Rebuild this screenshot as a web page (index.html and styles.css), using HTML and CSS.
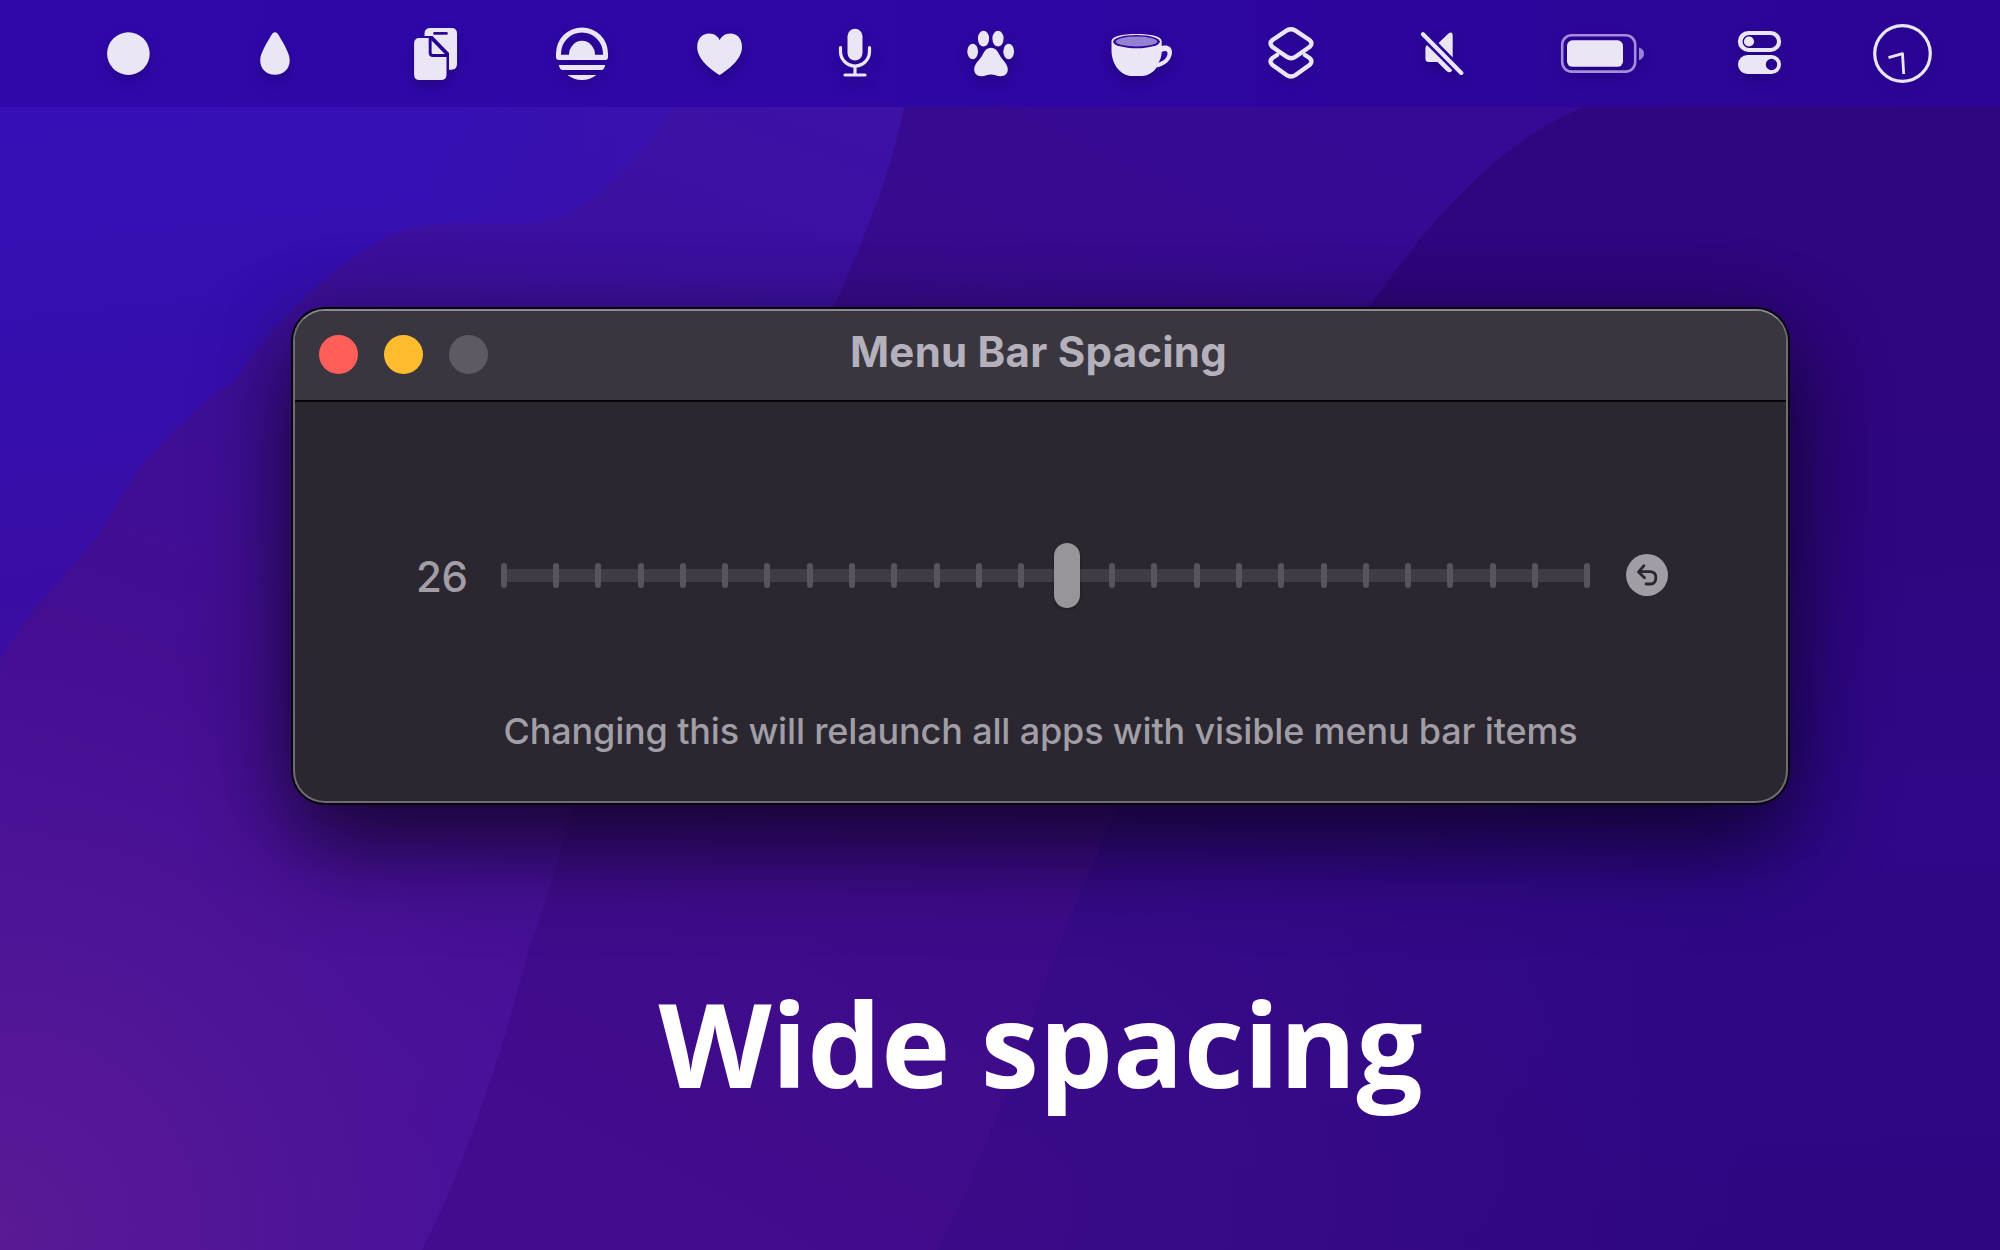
FILE: index.html
```html
<!DOCTYPE html>
<html lang="en">
<head>
<meta charset="utf-8">
<title>Menu Bar Spacing</title>
<link rel="stylesheet" href="styles.css">
</head>
<body>
<div class="desktop">
  <svg class="wallpaper" viewBox="0 0 2000 1250" preserveAspectRatio="none" aria-hidden="true">
    <defs>
      <linearGradient id="far" gradientUnits="userSpaceOnUse" x1="1700" y1="100" x2="1740" y2="1250">
        <stop offset="0" stop-color="#30067e"/><stop offset="0.35" stop-color="#2e067e"/><stop offset="0.62" stop-color="#2e0888"/><stop offset="1" stop-color="#2e0682"/>
      </linearGradient>
      <radialGradient id="farGlow" gradientUnits="userSpaceOnUse" cx="1000" cy="1200" r="750">
        <stop offset="0" stop-color="#3b0b88"/><stop offset="1" stop-color="#3b0b88" stop-opacity="0"/>
      </radialGradient>
      <linearGradient id="mid" gradientUnits="userSpaceOnUse" x1="1300" y1="100" x2="700" y2="1250">
        <stop offset="0" stop-color="#360a94"/><stop offset="0.5" stop-color="#3b0b86"/><stop offset="1" stop-color="#410c8e"/>
      </linearGradient>
      <linearGradient id="near" gradientUnits="userSpaceOnUse" x1="800" y1="100" x2="400" y2="1250">
        <stop offset="0" stop-color="#3b11a6"/><stop offset="0.35" stop-color="#3d0f98"/><stop offset="0.6" stop-color="#430e92"/><stop offset="0.85" stop-color="#47119a"/><stop offset="1" stop-color="#47109c"/>
      </linearGradient>
      <radialGradient id="corner" gradientUnits="userSpaceOnUse" cx="0" cy="1230" r="600">
        <stop offset="0" stop-color="#5a1a95"/><stop offset="0.4" stop-color="#541796" stop-opacity="0.75"/><stop offset="1" stop-color="#4c1296" stop-opacity="0"/>
      </radialGradient>
      <linearGradient id="blue" gradientUnits="userSpaceOnUse" x1="120" y1="110" x2="180" y2="660">
        <stop offset="0" stop-color="#3610b6"/><stop offset="0.4" stop-color="#350fae"/><stop offset="1" stop-color="#3b0da2"/>
      </linearGradient>
      <linearGradient id="blueFade" gradientUnits="userSpaceOnUse" x1="430" y1="0" x2="700" y2="0">
        <stop offset="0" stop-color="#3b11a6" stop-opacity="0"/><stop offset="1" stop-color="#3b11a6" stop-opacity="0.7"/>
      </linearGradient>
    </defs>
    <rect width="2000" height="1250" fill="url(#far)"/>
    <rect width="2000" height="1250" fill="url(#farGlow)"/>
    <path fill="url(#mid)" d="M0 0H1680V107H1584C1500 140 1430 220 1368 308C1240 500 1160 690 1110 823C1075 905 1042 985 1008 1087C985 1150 960 1205 938 1250H0Z"/>
    <path fill="url(#near)" d="M0 0H910L904 107C892 170 862 245 833 308C720 540 610 690 568 823C550 890 540 920 528 951C515 1000 503 1045 487 1090C470 1140 448 1200 422 1250H0Z"/>
    <path fill="url(#corner)" d="M0 600H640C600 680 582 760 568 823C550 890 540 920 528 951C515 1000 503 1045 487 1090C470 1140 448 1200 422 1250H0Z"/>
    <path fill="url(#blue)" d="M0 0H700L672 107C655 140 635 165 610 184C585 205 570 217 546 221C505 230 470 218 428 225C405 229 390 234 375 243C345 262 315 285 293 309C270 332 255 350 235 382C200 400 175 432 147 459C125 485 112 520 88 547C60 582 25 615 0 661Z"/>
    <path fill="url(#blueFade)" d="M430 107H672C655 140 635 165 610 184C585 205 570 217 546 221C505 230 470 218 430 225Z"/>
  </svg>

  <header class="menubar">
    <svg class="icon icon-dot" viewBox="107 24 43 60"><circle cx="128.4" cy="53.6" r="21.3"/></svg>
    <svg class="icon icon-drop" viewBox="260 24 30 60"><path d="M275 32.2C276.600 32.2 277.700 33.400 278.600 35C283.500 43.500 289.700 53 289.700 60.500C289.700 69 283.500 74.800 275 74.800S260.200 69 260.200 60.500C260.200 53 266.500 43.500 271.400 35C272.300 33.400 273.400 32.200 275 32.200Z"/></svg>
    <svg class="icon icon-docs" viewBox="414 24 43 60">
      <path d="M430.500 28H451.500Q457 28 457 33.500V64Q457 69.700 451.500 69.700H449V53L432.500 36H424.500V33.500Q424.500 28 430.500 28Z"/>
      <path class="cut" d="M434.500 33.400H446.500"/>
      <path d="M419.500 38H428.700V52.500Q428.700 57 433 57H446.500V74.500Q446.500 80 441 80H419.500Q414.100 80 414.100 74.500V43.500Q414.100 38 419.500 38Z"/>
      <path d="M431.600 40.500L444.800 54H433Q431.600 54 431.600 52.500Z"/>
    </svg>
    <svg class="icon icon-sun" viewBox="556 24 52 60">
      <path fill-rule="evenodd" d="M556 53.500A26 26 0 0 1 608 53.500V57Q608 60 605.300 60H558.700Q556 60 556 57ZM561 54.800H569A13 14 0 0 1 595 54.800H603V53.500A21 21 0 0 0 561 53.500Z"/>
      <path d="M558.700 65H605.300C604.500 68 603.500 70 601 70H563C560.500 70 559.500 68 558.700 65ZM567.500 75H596.500C592.500 78 587.500 80 582 80S571.500 78 567.500 75Z"/>
    </svg>
    <svg class="icon icon-heart" viewBox="697 24 45 60"><path d="M719.700 75C717 73.500 697.200 61.500 697.200 47.200C697.200 38.500 702.500 33.600 709 33.600C714.500 33.600 718 36.500 719.700 40.300C721.400 36.500 725 33.600 730.400 33.600C737 33.600 742 38.500 742 47.200C742 61.500 722 73.500 719.700 75Z"/></svg>
    <svg class="icon icon-mic" viewBox="839 24 32 60">
      <rect x="847.500" y="28.800" width="15" height="31.700" rx="7.500"/>
      <path class="line" d="M840.500 47.500V51.500A14.500 14.500 0 0 0 869.500 51.500V47.500M855 66.500V75M845 75H865"/>
    </svg>
    <svg class="icon icon-paw" viewBox="967 24 47 60">
      <ellipse cx="972.700" cy="51.500" rx="5.400" ry="7.700"/><ellipse cx="983.500" cy="38.600" rx="5.600" ry="7.900"/><ellipse cx="998" cy="38.600" rx="5.600" ry="7.900"/><ellipse cx="1008.700" cy="51.500" rx="5.400" ry="7.700"/>
      <path d="M991 47.800C994.500 47.800 997 50 999 54C1001.500 60 1007.800 63 1007.800 69.500C1007.800 73.500 1005 76.200 1000.500 76.200C996.500 76.200 994.500 74.500 991 74.500S985.500 76.200 981.500 76.200C977 76.200 974.200 73.500 974.200 69.500C974.200 63 980.500 60 983 54C985 50 987.500 47.800 991 47.800Z"/>
    </svg>
    <svg class="icon icon-cup" viewBox="1111 24 61 60">
      <path d="M1111.500 41C1111.500 36.500 1122 34 1136.500 34S1161.700 36.500 1161.700 41V46C1167 44.500 1172 46.500 1172 52C1172 60 1165 66 1156.500 67.500C1153 73 1147 76 1142 76H1132C1122 76 1111.500 66 1111.500 50Z"/>
      <ellipse class="void" cx="1136.500" cy="41.700" rx="23.400" ry="6.600"/>
      <ellipse class="tea" cx="1136.500" cy="41.500" rx="20.700" ry="5.100"/>
      <path class="void" d="M1161.700 52C1165 50.500 1168 50.500 1167.500 54C1167 58 1163 61.500 1158.500 62.500C1160.500 60 1161.500 56 1161.700 52Z"/>
    </svg>
    <svg class="icon icon-layers" viewBox="1268 24 46 60">
      <path class="thick" d="M1277 55L1272.500 58Q1268.500 61.500 1272.500 65L1286.500 75Q1291 78 1295.500 75L1309.500 65Q1313.500 61.500 1309.500 58L1305 55"/>
      <path class="thick" d="M1286.500 30.700Q1291 27.700 1295.500 30.700L1309.500 40Q1313.500 43.500 1309.500 47L1295.500 56.700Q1291 59.700 1286.500 56.700L1272.500 47Q1268.500 43.500 1272.500 40Z"/>
    </svg>
    <svg class="icon icon-mute" viewBox="1421 24 43 60">
      <path d="M1438.500 43L1448.500 33.500Q1452.700 30.500 1452.700 36V57.500ZM1427 45L1452 69.500C1452.500 72 1449.500 73.500 1446.500 71L1437.500 62H1429Q1425.400 62 1425.400 58.500V48.500Q1425.400 46 1427 45Z"/>
      <path class="slash-gap" d="M1427 38.300L1457.300 68.900"/>
      <path class="slash" d="M1423 34.300L1461.300 72.900"/>
    </svg>
    <svg class="icon icon-battery" viewBox="1561 24 84 60">
      <rect class="shell" x="1562.200" y="35.200" width="73" height="36.400" rx="9.500"/>
      <rect x="1567" y="40.300" width="56" height="26.500" rx="5.500"/>
      <path class="cap" d="M1639 47.500C1642 48.500 1644 50.500 1644 53.700S1642 59 1639 60.200Z"/>
    </svg>
    <svg class="icon icon-control" viewBox="1738 24 43 60">
      <path fill-rule="evenodd" d="M1748.300 31H1770.700A10.400 10.400 0 0 1 1770.700 51.900H1748.300A10.400 10.400 0 0 1 1748.300 31ZM1749 35A6.500 6.500 0 0 0 1749 48H1770.500A6.500 6.500 0 0 0 1770.500 35Z"/>
      <circle cx="1749" cy="41.500" r="5.100"/>
      <path fill-rule="evenodd" d="M1747.500 55H1771.500A9.500 9.500 0 0 1 1771.500 74H1747.500A9.500 9.500 0 0 1 1747.500 55ZM1771.500 58.800A5.700 5.700 0 1 0 1771.500 70.200A5.700 5.700 0 1 0 1771.500 58.800Z"/>
    </svg>
    <svg class="icon icon-clock" viewBox="1873 24 59 60">
      <circle class="line" cx="1902.500" cy="53.500" r="27.800"/>
      <path class="hand" d="M1888.500 57.700L1902.500 53.600L1903.700 74"/>
    </svg>
  </header>

  <main class="stage">
    <section class="window">
      <div class="titlebar">
        <div class="lights"><span class="light close"></span><span class="light minimize"></span><span class="light zoom"></span></div>
        <h1 class="title">Menu Bar Spacing</h1>
      </div>
      <div class="content">
        <div class="control-row">
          <span class="value">26</span>
          <div class="slider">
            <div class="ticks">
              <i></i><i></i><i></i><i></i><i></i><i></i><i></i><i></i><i></i><i></i><i></i><i></i><i></i><b class="thumb"></b><i></i><i></i><i></i><i></i><i></i><i></i><i></i><i></i><i></i><i></i><i></i><i></i>
            </div>
          </div>
          <svg class="reset" viewBox="0 0 42 42"><circle cx="21" cy="21" r="21"/><path d="M18 11.700L12.500 18L18.500 23.800M13 17.600H24.500Q29.800 18 29.800 23.500Q29.800 30 24.500 30H20"/></svg>
        </div>
        <p class="note">Changing this will relaunch all apps with visible menu bar items</p>
      </div>
    </section>
    <h2 class="caption">Wide spacing</h2>
  </main>
</div>
</body>
</html>
```
FILE: styles.css
```css
* { box-sizing: border-box; }
body { margin: 0; }
.desktop {
  position: relative;
  width: 2000px;
  height: 1250px;
  overflow: hidden;
  background: #34098c;
}
.wallpaper { position: absolute; inset: 0; width: 100%; height: 100%; }

/* Menu bar */
.menubar {
  position: relative;
  display: flex;
  height: 107px;
  padding-top: 24px;
  background: linear-gradient(90deg, #3008aa, #2e06a2 50%, #2c0596);
}
.icon {
  flex: none;
  height: 60px;
  overflow: visible;
  fill: #ebe6f6;
  filter: drop-shadow(0 5px 6px rgba(15, 0, 70, .35));
}
.icon-dot { width: 43px; margin-left: 107px; }
.icon-drop { width: 30px; margin-left: 110px; }
.icon-docs { width: 43px; margin-left: 124px; }
.icon-sun { width: 52px; margin-left: 99px; }
.icon-heart { width: 45px; margin-left: 89px; }
.icon-mic { width: 32px; margin-left: 97px; }
.icon-paw { width: 47px; margin-left: 96px; }
.icon-cup { width: 61px; margin-left: 97px; }
.icon-layers { width: 46px; margin-left: 96px; }
.icon-mute { width: 43px; margin-left: 107px; }
.icon-battery { width: 84px; margin-left: 97px; }
.icon-control { width: 43px; margin-left: 93px; }
.icon-clock { width: 59px; margin-left: 92px; }
.line, .thick, .slash, .slash-gap, .hand, .shell {
  fill: none;
  stroke: #ebe6f6;
  stroke-width: 3.2;
  stroke-linecap: round;
  stroke-linejoin: round;
}
.thick { stroke-width: 4.4; }
.slash { stroke-width: 4.2; }
.slash-gap { stroke: #2d069e; stroke-width: 9; stroke-linecap: butt; }
.hand { stroke-width: 2.8; stroke-linecap: butt; }
.shell { stroke-width: 2.6; stroke: #a48edb; }
.cap { fill: #9a82d6; }
.cut { fill: none; stroke: #2a078e; stroke-width: 2.6; stroke-linecap: round; }
.void { fill: #2e06a2; }
.tea { fill: #9680d2; }

/* Window */
.stage {
  position: relative;
  display: flex;
  flex-direction: column;
  padding: 202px 212px 0 293px;
}
.window {
  height: 494px;
  border-radius: 32px;
  overflow: hidden;
  background: #2b2731;
  border: 2px solid #6f6c74;
  border-top-color: #8b898f;
  box-shadow: 0 0 0 2px #08040f, 0 44px 92px rgba(0, 0, 0, .6), 0 0 80px rgba(0, 0, 0, .2);
}
.titlebar {
  display: grid;
  grid-template-columns: 1fr auto 1fr;
  align-items: center;
  height: 91px;
  padding: 0 24px 3px;
  background: #39363f;
  border-bottom: 2px solid #050407;
}
.lights { display: flex; gap: 26px; }
.light { width: 39px; height: 39px; border-radius: 50%; }
.close { background: #ff5f58; }
.minimize { background: #ffbc2f; }
.zoom { background: #5d5a64; }
.title {
  margin: 0 4px 4px 0;
  font: 700 42px/50px Inter, sans-serif;
  letter-spacing: .24px;
  color: #b5b1bc;
  white-space: nowrap;
}
.content { padding-top: 139px; font-family: Inter, sans-serif; color: #a19ea5; }
.control-row { display: flex; align-items: center; height: 68px; padding-left: 121px; }
.value { width: 85px; padding-top: 4px; font-size: 42px; font-weight: 500; letter-spacing: -.5px; line-height: 68px; }
.slider {
  width: 1089px;
  background: linear-gradient(#413b46, #413b46) center / 1083px 13px no-repeat;
}
.ticks { display: flex; align-items: center; justify-content: space-between; height: 68px; }
.ticks i {
  flex: none;
  width: 6px;
  height: 25px;
  margin-right: 36.27px;
  border-radius: 3px;
  background: #57545e;
}
.ticks i:first-child { margin-right: 46px; }
.ticks i:nth-last-child(2) { margin-right: 46px; }
.ticks i:last-child { margin-right: 0; }
.ticks i:nth-child(13) { margin-right: 29.7px; }
.thumb {
  flex: none;
  width: 26px;
  height: 65px;
  margin-right: 29.3px;
  border-radius: 13px;
  background: #97949a;
  box-shadow: 0 1px 3px rgba(0, 0, 0, .4);
}
.reset { flex: none; width: 42px; height: 42px; margin-left: 36px; }
.reset circle { fill: #a19da5; }
.reset path { fill: none; stroke: #2b2731; stroke-width: 2.8; stroke-linecap: round; stroke-linejoin: round; }
.note {
  margin: 97px 0 0;
  font-size: 36px;
  font-weight: 500;
  letter-spacing: -.155px;
  line-height: 50px;
  text-align: center;
  white-space: nowrap;
}
.caption {
  margin: 160px 0 0;
  font: 700 117px/160px "Open Sans", sans-serif;
  color: #fff;
  text-align: center;
}
```
